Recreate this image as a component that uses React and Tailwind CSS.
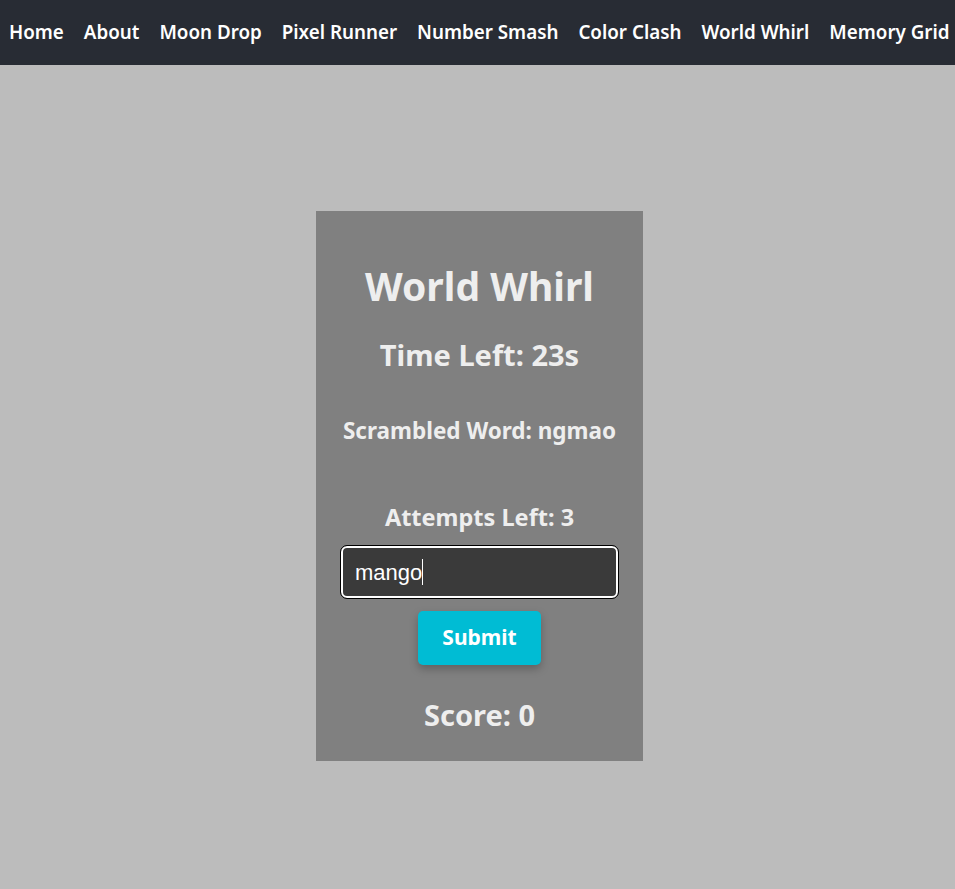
export default function App() {
  const links = ["Home", "About", "Moon Drop", "Pixel Runner", "Number Smash", "Color Clash", "World Whirl", "Memory Grid"];
  return (
    <div className="min-h-[889px] bg-[#bcbcbc]" style={{ fontFamily: '"Noto Sans", "Open Sans", sans-serif' }}>
      <nav className="h-[65px] bg-[#282c34] flex items-center pl-[9px] gap-[20px] whitespace-nowrap overflow-hidden">
        {links.map((l) => (
          <span key={l} className="text-white text-[18.8px] font-semibold">{l}</span>
        ))}
      </nav>
      <div className="flex justify-center pt-[146px] pl-[4px]">
        <div className="w-[327px] bg-[#808080] flex flex-col items-center text-[#eeeeee] font-bold pt-[55px] pb-[30px]">
          <div className="text-[39px] leading-[40px]">World Whirl</div>
          <div className="mt-[34px] text-[29px] leading-[30px]">Time Left: 23s</div>
          <div className="mt-[48px] text-[22.5px] leading-[26px]">Scrambled Word: ngmao</div>
          <div className="mt-[60px] text-[23.5px] leading-[26px]">Attempts Left: 3</div>
          <div className="mt-[16px] w-[277px] h-[52px] rounded-[6px] border-2 border-white outline outline-1 outline-black bg-[#3a3a3a] flex items-center px-[12px]">
            <span className="text-white text-[22px] font-normal" style={{ fontFamily: '"Liberation Sans", Arial, sans-serif' }}>mango</span>
            <span className="w-px h-[26px] bg-white"></span>
          </div>
          <div className="mt-[13px] w-[123px] h-[54px] rounded-[5px] bg-[#00bcd4] shadow-[0_4px_8px_rgba(0,0,0,0.25)] flex items-center justify-center text-white text-[21px]">Submit</div>
          <div className="mt-[34px] text-[29px] leading-[32px]">Score: 0</div>
        </div>
      </div>
    </div>
  );
}
